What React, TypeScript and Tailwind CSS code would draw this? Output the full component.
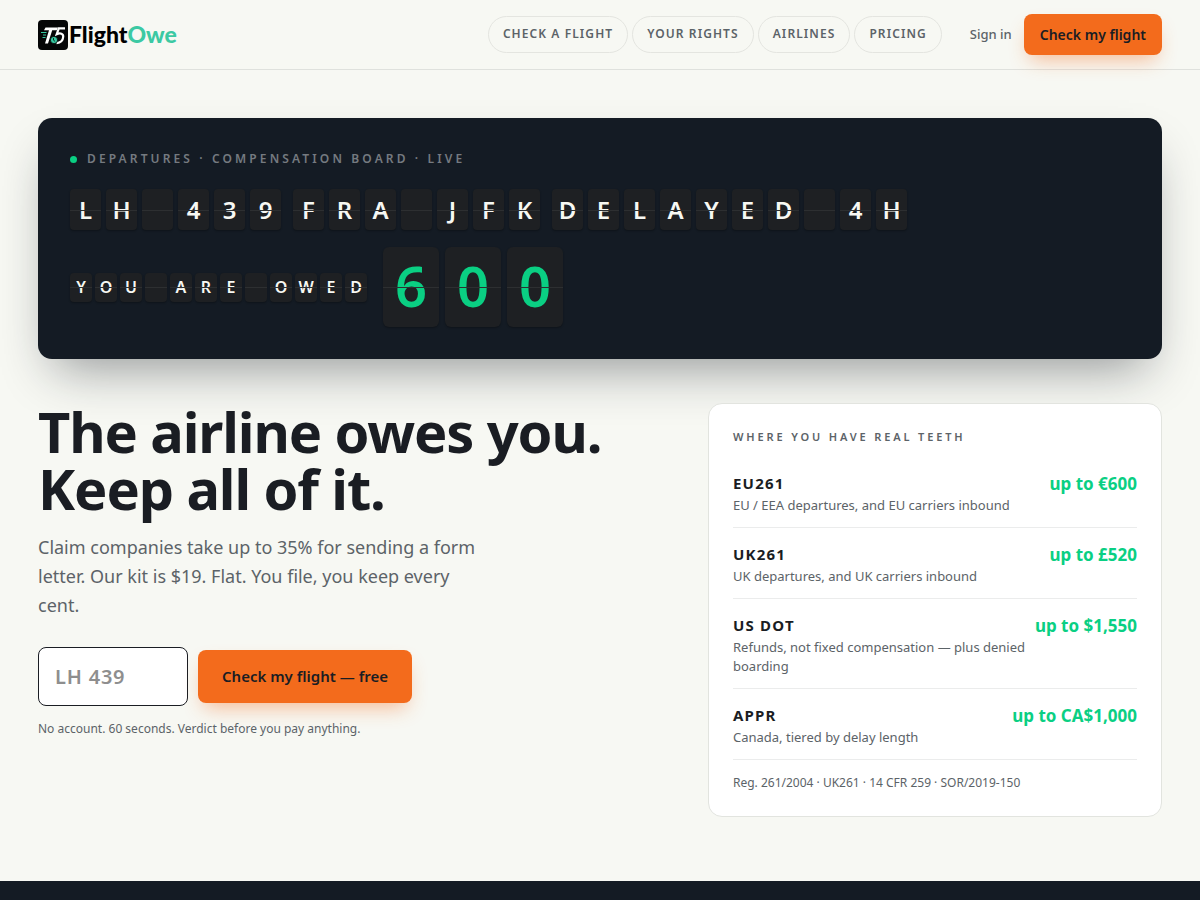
import { useState } from 'react'

type TileSize = 'sm' | 'md' | 'lg'

type Regulation = {
  code: string
  detail: string
  amount: string
}

const navLinks = [
  { label: 'Check a flight', href: '#check' },
  { label: 'Your rights', href: '#rights' },
  { label: 'Airlines', href: '#airlines' },
  { label: 'Pricing', href: '#pricing' },
]

const regulations: Regulation[] = [
  { code: 'EU261', detail: 'EU / EEA departures, and EU carriers inbound', amount: 'up to €600' },
  { code: 'UK261', detail: 'UK departures, and UK carriers inbound', amount: 'up to £520' },
  { code: 'US DOT', detail: 'Refunds, not fixed compensation — plus denied boarding', amount: 'up to $1,550' },
  { code: 'APPR', detail: 'Canada, tiered by delay length', amount: 'up to CA$1,000' },
]

const tileStyles: Record<TileSize, string> = {
  sm: 'h-[29px] w-[22px] rounded-sm text-base text-[#f7f8f3]',
  md: 'h-[41px] w-[31px] rounded text-2xl text-[#f7f8f3]',
  lg: 'h-20 w-14 rounded-md pb-1 text-[56px] text-[#0acf83]',
}

const rowGaps: Record<TileSize, string> = {
  sm: 'gap-[3px]',
  md: 'gap-[5px]',
  lg: 'gap-[6px]',
}

function FlapText({ text, size }: { text: string; size: TileSize }) {
  return (
    <div className={`flex ${rowGaps[size]}`}>
      {text.split('').map((char, index) => (
        <span
          key={index}
          className={`relative flex items-center justify-center bg-[#1e2023] font-semibold leading-none shadow-[0_1px_2px_rgba(0,0,0,0.3)] ${tileStyles[size]}`}
        >
          {char}
          <span className="absolute inset-x-0 top-1/2 h-px bg-[#2d2f31]" />
        </span>
      ))}
    </div>
  )
}

function Logo() {
  return (
    <a href="#top" className="flex items-center gap-px" aria-label="FlightOwe">
      <svg viewBox="0 0 30 30" className="size-[30px]" aria-hidden="true">
        <rect width="30" height="30" rx="4" fill="#050607" />
        <path d="M7.500 7.500H20L18.800 10.300H14.200L10 23.500H7L11 10.300H6z" fill="#fff" />
        <path
          d="M27 8.300H20.800L18.700 14.200C22.500 12.600 25.400 13.800 25.200 16.800C25 20.500 22 22.800 18.500 23.200"
          fill="none"
          stroke="#fff"
          strokeWidth="2.200"
        />
        <path d="M3 12.500h5.500M5 15h3M4.500 17.500h3" stroke="#35c9a1" strokeWidth="1.200" />
        <circle cx="16" cy="20" r="3.600" fill="#35c9a1" stroke="#050607" strokeWidth=".8" />
        <path d="M15.500 18v2.200l1.600 1.200" fill="none" stroke="#050607" strokeWidth=".8" />
      </svg>
      <span className="font-[Lato,sans-serif] text-[23px] font-black leading-none text-black">
        Flight<span className="text-[#3cc9a3]">Owe</span>
      </span>
    </a>
  )
}

export default function App() {
  const [flight, setFlight] = useState('')

  return (
    <div id="top" className="flex min-h-screen flex-col bg-[#f7f8f3] font-['Noto_Sans',sans-serif] text-[#1a1d23]">
      <header className="flex items-center justify-between border-b border-[#dfe1dd] px-[38px] py-3.5">
        <Logo />
        <div className="flex items-center gap-3">
          <nav className="mr-4 flex gap-1">
            {navLinks.map((link) => (
              <a
                key={link.href}
                href={link.href}
                className="rounded-full border border-[#e4e5e0] px-3.5 pb-2.5 pt-2 text-xs font-semibold uppercase leading-[17px] tracking-[0.09em] text-[#5c6368]"
              >
                {link.label}
              </a>
            ))}
          </nav>
          <a href="#signin" className="text-[13px] font-medium text-[#5c6368]">
            Sign in
          </a>
          <button
            type="button"
            className="rounded-lg bg-[#f36b1c] px-4 py-2.5 text-sm font-semibold leading-[21px] text-[#1a1d23] shadow-[0_10px_20px_-6px_rgba(243,107,28,0.45)]"
          >
            Check my flight
          </button>
        </div>
      </header>

      <main className="px-[38px] pb-16 pt-12">
        <section className="rounded-[14px] bg-[#141b24] p-8 shadow-[0_24px_48px_-16px_rgba(20,27,36,0.45)]">
          <p className="flex items-center gap-2.5 text-xs font-semibold uppercase leading-[18px] tracking-[0.26em] text-[#757a80]">
            <span className="size-[7px] rounded-full bg-[#0acf83]" />
            Departures · Compensation board · Live
          </p>
          <div className="mt-[21px] flex flex-wrap gap-3">
            <FlapText text="LH 439" size="md" />
            <FlapText text="FRA JFK" size="md" />
            <FlapText text="DELAYED 4H" size="md" />
          </div>
          <div className="mt-[17px] flex flex-wrap items-center gap-4">
            <FlapText text="YOU ARE OWED" size="sm" />
            <FlapText text="600" size="lg" />
          </div>
        </section>

        <div className="mt-11 grid grid-cols-[1fr_454px] items-start gap-14">
          <section id="check">
            <h1 className="text-[56px] font-bold leading-[57px] tracking-[-0.02em]">
              The airline owes you.
              <br />
              Keep all of it.
            </h1>
            <p className="mt-4 max-w-[450px] text-lg leading-[29px] text-[#5c6368]">
              Claim companies take up to 35% for sending a form letter. Our kit is $19. Flat. You file, you keep every cent.
            </p>
            <form className="mt-[27px] flex items-center gap-2.5" onSubmit={(e) => e.preventDefault()}>
              <input
                type="text"
                aria-label="Flight number"
                placeholder="LH 439"
                value={flight}
                onChange={(e) => setFlight(e.target.value)}
                className="h-[59px] w-[150px] rounded-lg border border-[#1a1d23] bg-white px-4 text-xl font-semibold tracking-[0.04em] placeholder:text-[#8e8e8e]"
              />
              <button
                type="submit"
                className="rounded-lg bg-[#f36b1c] px-6 py-[15px] text-[15px] font-semibold leading-[23px] text-[#1a1d23] shadow-[0_10px_20px_-6px_rgba(243,107,28,0.45)]"
              >
                Check my flight — free
              </button>
            </form>
            <p className="mt-3.5 text-xs leading-[18px] text-[#5c6368]">No account. 60 seconds. Verdict before you pay anything.</p>
          </section>

          <aside id="rights" className="rounded-[14px] border border-[#e2e4df] bg-white p-6">
            <h2 className="text-[11px] font-semibold uppercase leading-[18px] tracking-[0.26em] text-[#5c6368]">Where you have real teeth</h2>
            <ul className="mt-[11px]">
              {regulations.map((item) => (
                <li key={item.code} className="flex items-start justify-between gap-1 border-b border-[#ebecec] pb-3 pt-3.5">
                  <div>
                    <h3 className="text-[15px] font-bold leading-[25px] tracking-[0.08em]">{item.code}</h3>
                    <p className="text-[13px] leading-[19px] text-[#5c6368]">{item.detail}</p>
                  </div>
                  <p className="whitespace-nowrap text-[17px] font-bold leading-[25px] text-[#0acf83]">{item.amount}</p>
                </li>
              ))}
            </ul>
            <p className="mt-3.5 text-xs leading-[18px] text-[#5c6368]">Reg. 261/2004 · UK261 · 14 CFR 259 · SOR/2019-150</p>
          </aside>
        </div>
      </main>

      <footer className="min-h-5 grow bg-[#141b24]" />
    </div>
  )
}
